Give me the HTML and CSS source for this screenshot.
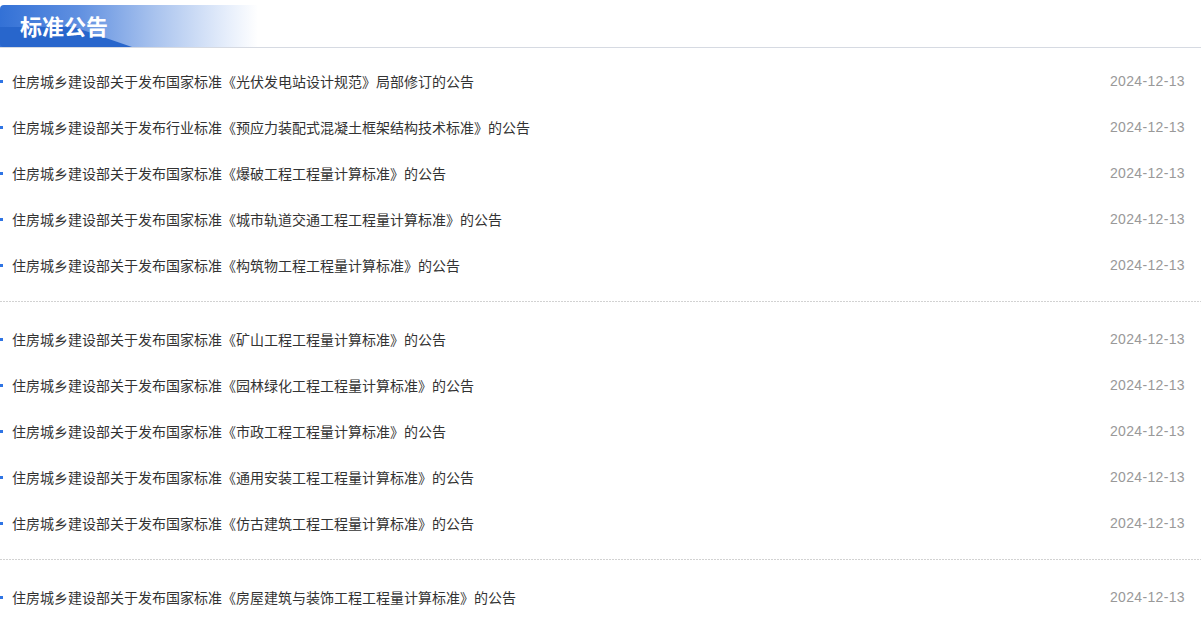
FILE: index.html
```html
<!DOCTYPE html>
<html lang="zh-CN">
<head>
    <meta charset="UTF-8">
    <meta name="viewport" content="width=device-width, initial-scale=1.0">
    <title>标准公告</title>
    <link rel="stylesheet" href="styles.css">
</head>
<body>
    <div id="notice">
        <div class="notice-head">
            <div class="notice-tab">标准公告</div>
        </div>

        <ul class="notice-group">
            <li><a href="#">住房城乡建设部关于发布国家标准《光伏发电站设计规范》局部修订的公告</a><span class="date">2024-12-13</span></li>
            <li><a href="#">住房城乡建设部关于发布行业标准《预应力装配式混凝土框架结构技术标准》的公告</a><span class="date">2024-12-13</span></li>
            <li><a href="#">住房城乡建设部关于发布国家标准《爆破工程工程量计算标准》的公告</a><span class="date">2024-12-13</span></li>
            <li><a href="#">住房城乡建设部关于发布国家标准《城市轨道交通工程工程量计算标准》的公告</a><span class="date">2024-12-13</span></li>
            <li><a href="#">住房城乡建设部关于发布国家标准《构筑物工程工程量计算标准》的公告</a><span class="date">2024-12-13</span></li>
        </ul>
        <div class="divider"></div>

        <ul class="notice-group">
            <li><a href="#">住房城乡建设部关于发布国家标准《矿山工程工程量计算标准》的公告</a><span class="date">2024-12-13</span></li>
            <li><a href="#">住房城乡建设部关于发布国家标准《园林绿化工程工程量计算标准》的公告</a><span class="date">2024-12-13</span></li>
            <li><a href="#">住房城乡建设部关于发布国家标准《市政工程工程量计算标准》的公告</a><span class="date">2024-12-13</span></li>
            <li><a href="#">住房城乡建设部关于发布国家标准《通用安装工程工程量计算标准》的公告</a><span class="date">2024-12-13</span></li>
            <li><a href="#">住房城乡建设部关于发布国家标准《仿古建筑工程工程量计算标准》的公告</a><span class="date">2024-12-13</span></li>
        </ul>
        <div class="divider"></div>

        <ul class="notice-group">
            <li><a href="#">住房城乡建设部关于发布国家标准《房屋建筑与装饰工程工程量计算标准》的公告</a><span class="date">2024-12-13</span></li>
        </ul>
    </div>
</body>
</html>
```

FILE: styles.css
```css
body {
    margin: 0;
    font-family: "Noto Sans CJK SC", "Noto Sans", sans-serif;
    background: #fff;
    color: #333;
}

#notice {
    width: 1201px;
}

.notice-head {
    padding-top: 5px;
    border-bottom: 1px solid #d6dae2;
}

.notice-tab {
    position: relative;
    z-index: 0;
    width: 238px;
    height: 42px;
    line-height: 40px;
    padding-left: 20px;
    border-radius: 4px 0 0 0;
    background: linear-gradient(90deg, #3371d6 0%, #5f8fe0 30%, #a9c3ee 60%, #e6eefb 88%, rgba(255, 255, 255, 0) 100%);
    color: #fff;
    font-size: 22px;
    font-weight: bold;
    overflow: hidden;
}

/* darker wedge along the bottom of the tab */
.notice-tab::before {
    content: "";
    position: absolute;
    z-index: -1;
    left: 0;
    bottom: 0;
    width: 132px;
    height: 20px;
    background: #2866cc;
    clip-path: polygon(0 0, 0 100%, 100% 100%, 56% 0);
    border-radius: 0 0 0 4px;
}

.notice-group {
    list-style: none;
    margin: 0;
    padding: 15px 0 12px;
}

.notice-group:first-of-type {
    padding-top: 11px;
}

.notice-group li {
    position: relative;
    display: flex;
    justify-content: space-between;
    align-items: center;
    height: 46px;
    box-sizing: border-box;
    padding: 0 16px 2px 12px;
    font-size: 14px;
}

.notice-group li::before {
    content: "";
    position: absolute;
    left: 0;
    top: 21px;
    width: 3px;
    height: 3px;
    background: #2f74e4;
}

.notice-group a {
    color: #333;
    text-decoration: none;
}

.date {
    color: #999;
    font-family: "Liberation Sans", Arial, sans-serif;
    font-size: 14px;
    letter-spacing: 0.35px;
}

.divider {
    height: 1px;
    background-image: repeating-linear-gradient(90deg, #d2d2d2 0 2px, transparent 2px 3px);
}
```
